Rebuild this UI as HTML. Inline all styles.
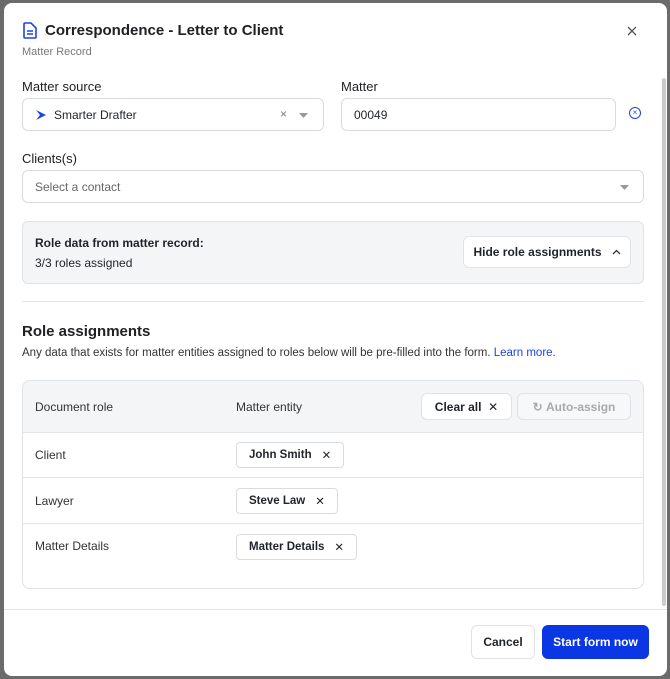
<!DOCTYPE html>
<html><head><style>
*{box-sizing:border-box;margin:0;padding:0}
body{width:670px;height:679px;background:#6b6b6b;font-family:"Liberation Sans",sans-serif;color:#1f2329;position:relative;overflow:hidden}
.m{position:absolute;left:4px;top:3px;width:663px;height:673px;background:#fff;border-radius:8px;overflow:hidden}
.a{position:absolute}
.t{font-size:15px;font-weight:bold;color:#202124}
.lbl{font-size:13px;color:#202124}
.inp{position:absolute;border:1px solid #d8dbe0;border-radius:6px;background:#fff;font-size:12px}
.btn{position:absolute;border:1px solid #dfe2e6;border-radius:6px;background:#fff;font-size:12px;font-weight:bold;display:flex;align-items:center;justify-content:center}
.chip{position:absolute;border:1px solid #d8dbe0;border-radius:4px;background:#fff;font-size:11.5px;font-weight:bold;height:26px;display:flex;align-items:center;padding:0 12px;gap:10px}
.row{position:absolute;left:18px;width:622px;border-top:1px solid #e3e5e8}
.cell{position:absolute;font-size:12px;color:#333}
</style></head><body>
<div class="m">
<svg class="a" style="left:19px;top:19px" width="14" height="17" viewBox="0 0 14 17"><path d="M2 1h6l5 5v9a1 1 0 0 1-1 1H2a1 1 0 0 1-1-1V2a1 1 0 0 1 1-1z" fill="none" stroke="#1a44e6" stroke-width="1.6"/><path d="M4 9h6M4 12h6" stroke="#1a44e6" stroke-width="1.4"/></svg>
<div class="a t" style="left:41px;top:19px">Correspondence - Letter to Client</div>
<div class="a" style="left:18px;top:43px;font-size:11px;color:#777">Matter Record</div>
<svg class="a" style="left:623px;top:23px" width="10" height="10" viewBox="0 0 10 10"><path d="M1 1l8 8M9 1l-8 8" stroke="#555" stroke-width="1.3"/></svg>
<div class="a lbl" style="left:18px;top:76px">Matter source</div>
<div class="inp" style="left:18px;top:95px;width:302px;height:33px"><svg class="a" style="left:12px;top:10px" width="12" height="12" viewBox="0 0 12 12"><path d="M1 1l10 5-10 5 4-5z" fill="#1a44e6"/></svg><span class="a" style="left:31px;top:9px">Smarter Drafter</span><span class="a" style="left:257px;top:8px;color:#777">×</span><svg class="a" style="left:276px;top:14px" width="9" height="5"><path d="M0 0h9L4.5 5z" fill="#999"/></svg></div>
<div class="a lbl" style="left:337px;top:76px">Matter</div>
<div class="inp" style="left:337px;top:95px;width:275px;height:33px"><span class="a" style="left:12px;top:9px">00049</span></div>
<div class="a" style="left:625px;top:104px;width:12px;height:12px;border:1.3px solid #1a44e6;border-radius:50%;color:#1a44e6;font-size:8px;line-height:9px;text-align:center">×</div>
<div class="a lbl" style="left:18px;top:148px">Clients(s)</div>
<div class="inp" style="left:18px;top:167px;width:622px;height:33px"><span class="a" style="left:12px;top:9px;color:#666">Select a contact</span><svg class="a" style="left:597px;top:14px" width="9" height="5"><path d="M0 0h9L4.5 5z" fill="#999"/></svg></div>
<div class="a" style="left:18px;top:218px;width:622px;height:63px;background:#f4f5f7;border:1px solid #dfe2e6;border-radius:6px"></div>
<div class="a" style="left:31px;top:233px;font-size:12px;font-weight:bold">Role data from matter record:</div>
<div class="a" style="left:31px;top:253px;font-size:12px">3/3 roles assigned</div>
<div class="btn" style="left:459px;top:233px;width:168px;height:32px">Hide role assignments &nbsp;&nbsp;<svg width="9" height="6"><path d="M1 5l3.5-3.5L8 5" fill="none" stroke="#333" stroke-width="1.3"/></svg></div>
<div class="a" style="left:18px;top:298px;width:622px;border-top:1px solid #e3e5e8"></div>
<div class="a t" style="left:18px;top:320px">Role assignments</div>
<div class="a" style="left:18px;top:344px;font-size:11.5px;color:#333">Any data that exists for matter entities assigned to roles below will be pre-filled into the form. <span style="color:#1a44e6">Learn more.</span></div>
<div class="a" style="left:18px;top:377px;width:622px;height:209px;border:1px solid #dfe2e6;border-radius:8px;overflow:hidden"><div style="height:52px;background:#f4f5f7"></div></div>
<div class="cell" style="left:31px;top:397px">Document role</div>
<div class="cell" style="left:232px;top:397px">Matter entity</div>
<div class="btn" style="left:417px;top:390px;width:91px;height:27px">Clear all &nbsp;<span style="font-weight:normal">✕</span></div>
<div class="btn" style="left:513px;top:390px;width:114px;height:27px;color:#aaa;background:#f7f8f9">↻&nbsp;Auto-assign</div>
<div class="row" style="top:429px"></div>
<div class="cell" style="left:31px;top:445px">Client</div>
<div class="chip" style="left:232px;top:439px">John Smith <span style="font-weight:normal">✕</span></div>
<div class="row" style="top:474px"></div>
<div class="cell" style="left:31px;top:491px">Lawyer</div>
<div class="chip" style="left:232px;top:485px">Steve Law <span style="font-weight:normal">✕</span></div>
<div class="row" style="top:520px"></div>
<div class="cell" style="left:31px;top:536px">Matter Details</div>
<div class="chip" style="left:232px;top:531px">Matter Details <span style="font-weight:normal">✕</span></div>
<div class="a" style="left:658px;top:75px;width:4px;height:528px;background:#ccc;border-radius:2px"></div>
<div class="a" style="left:0;top:606px;width:663px;border-top:1px solid #e3e5e8"></div>
<div class="btn" style="left:467px;top:622px;width:64px;height:34px">Cancel</div>
<div class="btn" style="left:538px;top:622px;width:107px;height:34px;background:#0a36e3;border-color:#0a36e3;color:#fff">Start form now</div>
</div>
</body></html>
